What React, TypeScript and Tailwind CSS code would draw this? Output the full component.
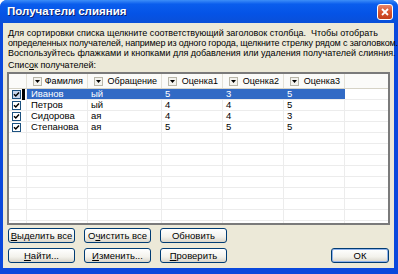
import React from "react";

interface Recipient {
  lastName: string;
  salutation: string;
  g1: string;
  g2: string;
  g3: string;
}

const recipients: Recipient[] = [
  { lastName: "Иванов", salutation: "ый", g1: "5", g2: "3", g3: "5" },
  { lastName: "Петров", salutation: "ый", g1: "4", g2: "4", g3: "5" },
  { lastName: "Сидорова", salutation: "ая", g1: "4", g2: "4", g3: "3" },
  { lastName: "Степанова", salutation: "ая", g1: "5", g2: "5", g3: "5" },
];

const columns = ["Фамилия", "Обращение", "Оценка1", "Оценка2", "Оценка3"];
const colWidths = ["w-[61px]", "w-[74px]", "w-[61px]", "w-[61px]", "w-[61px]"];

const DropArrow: React.FC = () => (
  <span className="flex h-[9px] w-[9px] items-center justify-center border border-[#b9b7aa] bg-[#f4f3ee]">
    <svg width="5" height="3" viewBox="0 0 5 3">
      <path d="M0 0h5L2.5 3z" fill="#000" />
    </svg>
  </span>
);

const Check: React.FC<{ selected?: boolean }> = ({ selected }) => (
  <span
    className={`flex h-[9px] w-[9px] items-center justify-center border border-[#1c5180] ${
      selected ? "bg-[#c8d6ee]" : "bg-white"
    }`}
  >
    <svg width="7" height="7" viewBox="0 0 7 7">
      <path d="M1 3.2l1.8 1.8L6 1.6" stroke="#000" strokeWidth="1.5" fill="none" />
    </svg>
  </span>
);

const XpButton: React.FC<{ children: React.ReactNode; def?: boolean }> = ({ children, def }) => (
  <div
    className={`flex h-[15px] items-center justify-center rounded-[3px] border border-[#003c74] bg-[linear-gradient(#ffffff,#f3f2ec_60%,#d9d5ca)] text-[9.5px] text-black ${
      def ? "w-[58px] shadow-[inset_0_0_0_1px_#8fb2ea]" : "w-[67px]"
    }`}
  >
    {children}
  </div>
);

const App: React.FC = () => {
  const emptyRows = Array.from({ length: 9 });

  return (
    <div
      className="flex h-[274px] w-[398px] flex-col overflow-hidden rounded-t-[7px] bg-[#0a48dc] pb-[6px] pl-[3px] pr-[4px]"
      style={{ fontFamily: '"Liberation Sans", Arial, sans-serif' }}
    >
      {/* Title bar */}
      <div className="-ml-[3px] -mr-[4px] flex h-[23px] shrink-0 items-center justify-between bg-[linear-gradient(#3d8ef8,#0a5ded_18%,#0553e6_60%,#0a4fd8)] pl-[7px] pr-[5px]">
        <span className="text-[11.5px] font-bold text-white [text-shadow:1px_1px_#0a1f6d]">
          Получатели слияния
        </span>
        <div className="flex h-[16px] w-[16px] items-center justify-center rounded-[3px] border border-white bg-[linear-gradient(#e8866a,#d8542e_50%,#c23f1b)]">
          <svg width="8" height="8" viewBox="0 0 8 8">
            <path d="M1 1l6 6M7 1L1 7" stroke="#fff" strokeWidth="1.8" />
          </svg>
        </div>
      </div>

      {/* Body */}
      <div className="flex flex-1 flex-col bg-[#ece9d8] px-[4px] pt-[5px] text-[9px] leading-[10px] text-black">
        <div className="pl-[1px]">
          <p className="whitespace-nowrap">
            Для сортировки списка щелкните соответствующий заголовок столбца.&nbsp; Чтобы отобрать
          </p>
          <p className="whitespace-nowrap tracking-[-0.15px]">
            определенных получателей, например из одного города, щелкните стрелку рядом с заголовком.
          </p>
          <p className="whitespace-nowrap">
            Воспользуйтесь флажками и кнопками для добавления или удаления получателей слияния.
          </p>
          <p className="mt-[2px] whitespace-nowrap">
            Спис<span className="underline">о</span>к получателей:
          </p>
        </div>

        {/* List */}
        <div className="mt-[2px] h-[153px] overflow-hidden border-2 border-[#7a7a7a] bg-white">
          <div className="flex h-[15px] border-b border-[#d6d3c6] bg-[#fbfbf9]">
            <div className="w-[18px] border-r border-[#e3e1d8]" />
            {columns.map((c, i) => (
              <div
                key={c}
                className={`${colWidths[i]} flex items-center border-r border-[#e3e1d8] pl-[6px] pr-[4px]`}
              >
                <DropArrow />
                <span className="flex-1 text-right">{c}</span>
              </div>
            ))}
          </div>

          {recipients.map((r, idx) => {
            const sel = idx === 0;
            const cells = [r.lastName, r.salutation, r.g1, r.g2, r.g3];
            return (
              <div key={r.lastName} className="flex h-[11px] border-b border-[#ececec] text-[9.5px]">
                <div className="relative flex w-[18px] items-center border-r border-[#ececec] pl-[3px]">
                  <Check selected={sel} />
                  {sel && <span className="absolute right-[1px] top-0 h-[11px] w-[3px] bg-black" />}
                </div>
                {cells.map((v, i) => (
                  <div
                    key={i}
                    className={`${colWidths[i]} flex items-center border-r ${
                      sel ? "border-[#316ac5] bg-[#316ac5] text-white" : "border-[#ececec]"
                    } ${i === 0 ? "pl-[4px]" : "pl-[3px]"}`}
                  >
                    {v}
                  </div>
                ))}
              </div>
            );
          })}

          {emptyRows.map((_, idx) => (
            <div key={idx} className="flex h-[11px] border-b border-[#ececec]">
              <div className="w-[18px] border-r border-[#ececec]" />
              {colWidths.map((w, i) => (
                <div key={i} className={`${w} border-r border-[#ececec]`} />
              ))}
            </div>
          ))}
        </div>

        {/* Buttons */}
        <div className="mt-[3px] flex gap-[9px] pl-[1px]">
          <XpButton>
            <span className="underline">В</span>ыделить все
          </XpButton>
          <XpButton>
            О<span className="underline">ч</span>истить все
          </XpButton>
          <XpButton>Обновить</XpButton>
        </div>
        <div className="mt-[5px] flex items-center pl-[1px] pr-[1px]">
          <div className="flex gap-[9px]">
            <XpButton>
              <span className="underline">Н</span>айти...
            </XpButton>
            <XpButton>
              <span className="underline">И</span>зменить...
            </XpButton>
            <XpButton>
              <span className="underline">П</span>роверить
            </XpButton>
          </div>
          <div className="ml-auto">
            <XpButton def>ОК</XpButton>
          </div>
        </div>
      </div>
    </div>
  );
};

export default App;
